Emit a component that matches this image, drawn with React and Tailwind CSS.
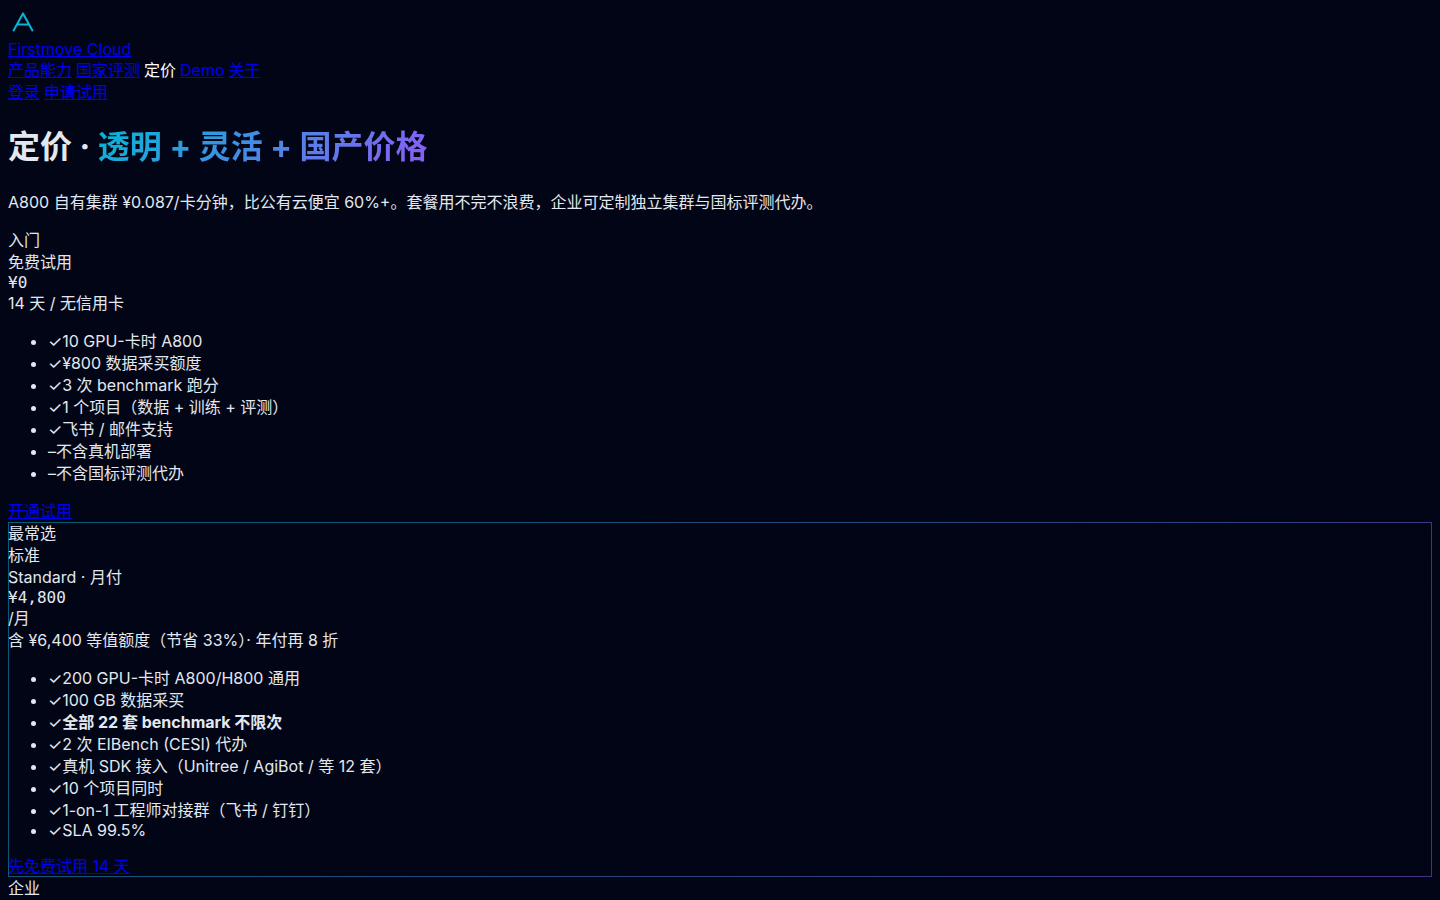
import React from "react";

const navLinks = [
    { label: "产品能力", href: "#product" },
    { label: "国家评测", href: "#benchmark" },
    { label: "定价", active: true },
    { label: "Demo", href: "#demo" },
    { label: "关于", href: "#about" },
];

const trialFeatures = [
    "✓10 GPU-卡时 A800",
    "✓¥800 数据采买额度",
    "✓3 次 benchmark 跑分",
    "✓1 个项目（数据 + 训练 + 评测）",
    "✓飞书 / 邮件支持",
    "–不含真机部署",
    "–不含国标评测代办",
];

const TextLink = ({ href, children }) => (
    <a href={href} className="text-[#0000ee] underline">
        {children}
    </a>
);

const Logo = () => (
    <svg
        width="28"
        height="28"
        viewBox="0 0 28 28"
        fill="none"
        className="block"
        aria-hidden="true"
    >
        <path
            d="M5.6 22.4 L15 5.4 L24.4 22.4 M9 16.6 H21"
            stroke="#06b6d4"
            strokeWidth="2"
            strokeLinecap="round"
            strokeLinejoin="round"
        />
    </svg>
);

const Header = () => (
    <header>
        <a href="#home" className="block text-[#0000ee] underline">
            <Logo />
            <span className="mt-1 block leading-[19px]">Firstmove Cloud</span>
        </a>
        <nav className="flex gap-1">
            {navLinks.map((link) =>
                link.active ? (
                    <span key={link.label} className="text-white">
                        {link.label}
                    </span>
                ) : (
                    <TextLink key={link.label} href={link.href}>
                        {link.label}
                    </TextLink>
                )
            )}
        </nav>
        <div className="flex gap-1">
            <TextLink href="#login">登录</TextLink>
            <TextLink href="#apply">申请试用</TextLink>
        </div>
    </header>
);

export default function App() {
    return (
        <div
            lang="zh-CN"
            className="min-h-screen bg-[#020515] p-2 font-['Inter','Noto_Sans_CJK_SC',sans-serif] text-base leading-[22px] text-[#e2e8f0]"
        >
            <Header />

            <main>
                {/* Hero */}
                <h1 className="my-[21px] text-[32px] leading-[46px] font-bold">
                    定价 ·{" "}
                    <span className="bg-linear-135/srgb from-[#06b6d4] to-[#8b5cf6] bg-clip-text text-transparent">
                        透明 + 灵活 + 国产价格
                    </span>
                </h1>
                <p>
                    A800 自有集群 ¥0.087/卡分钟，比公有云便宜 60%+。套餐用不完不浪费，企业可定制独立集群与国标评测代办。
                </p>

                {/* Trial plan */}
                <section className="mt-4">
                    <div>入门</div>
                    <div>免费试用</div>
                    <div className="font-['DejaVu_Sans_Mono',monospace] leading-[19px]">
                        ¥0
                    </div>
                    <div>14 天 / 无信用卡</div>
                    <ul className="my-4 list-disc pl-10">
                        {trialFeatures.map((feature) => (
                            <li key={feature}>{feature}</li>
                        ))}
                    </ul>
                    <TextLink href="#trial">开通试用</TextLink>
                </section>

                {/* Standard plan */}
                <section className="relative">
                    <div className="pointer-events-none absolute inset-0 bg-linear-135/srgb from-[#06b6d4] to-[#8b5cf6] mask-[linear-gradient(#000_0_0),linear-gradient(#000_0_0)] mask-exclude p-px opacity-50 [mask-clip:content-box,border-box]"></div>
                    <div>最常选</div>
                    <div>标准</div>
                    <div>Standard · 月付</div>
                    <div className="font-['DejaVu_Sans_Mono',monospace] leading-[19px]">
                        ¥4,800
                    </div>
                    <div>/月</div>
                    <div>含 ¥6,400 等值额度（节省 33%）· 年付再 8 折</div>
                    <ul className="my-4 list-disc pl-10">
                        <li>✓200 GPU-卡时 A800/H800 通用</li>
                        <li>✓100 GB 数据采买</li>
                        <li>
                            ✓<strong>全部 22 套 benchmark 不限次</strong>
                        </li>
                        <li>✓2 次 EIBench (CESI) 代办</li>
                        <li>✓真机 SDK 接入（Unitree / AgiBot / 等 12 套）</li>
                        <li>✓10 个项目同时</li>
                        <li>✓1-on-1 工程师对接群（飞书 / 钉钉）</li>
                        <li className="leading-[19px]">✓SLA 99.5%</li>
                    </ul>
                    <div className="leading-[21px]">
                        <TextLink href="#trial">先免费试用 14 天</TextLink>
                    </div>
                </section>

                {/* Enterprise plan */}
                <section>
                    <div>企业</div>
                </section>
            </main>
        </div>
    );
}
